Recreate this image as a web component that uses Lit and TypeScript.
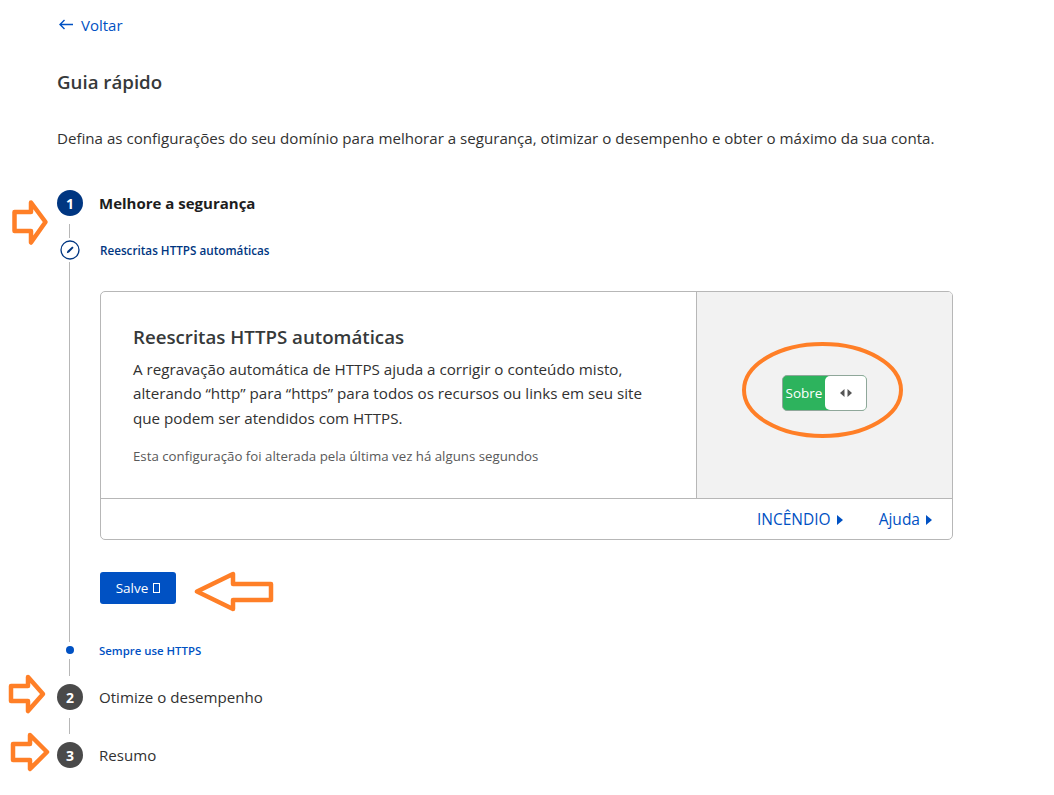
import { LitElement, css, html, svg } from 'lit';
import { customElement } from 'lit/decorators.js';

const ORANGE = '#ff7f27';

// hand-drawn annotations on top of the screenshot, page coordinates
const ARROWS = [
  '14.5,212 31,212 31,202.5 45.5,222 31,242.5 31,231 14.5,231',
  '197,591.5 233,574 233,584 271,584 271,600 233,600 233,609',
  '11,686 28,686 28,677 43,694 28,711 28,701 11,701',
  '13,744 30,744 30,735 47,752 30,769 30,760 13,760',
];

@customElement('app-root')
export class AppRoot extends LitElement {
  render() {
    return html`
      <main>
        <a class="back">
          <svg width="16" height="12" viewBox="0 0 16 12" fill="none" stroke="currentColor" stroke-width="1.4">
            <path d="M15 5.5H2M6.5 1 2 5.5 6.5 10" />
          </svg>
          Voltar
        </a>
        <h1>Guia rápido</h1>
        <p class="intro">
          Defina as configurações do seu domínio para melhorar a segurança, otimizar o desempenho e obter o máximo da sua conta.
        </p>

        <div class="steps">
          <div class="rail"><span class="num active">1</span></div>
          <div class="step-title active">Melhore a segurança</div>

          <div class="rail short-a"><span class="line"></span></div>
          <div></div>

          <div class="rail">
            <span class="pencil">
              <svg width="20" height="20" viewBox="0 0 20 20" fill="none">
                <circle cx="10" cy="10" r="9" stroke="#003681" stroke-width="1.3" />
                <path d="M6.8 13.2 7.4 11 12.3 6.4 13.6 7.7 9 12.6Z" fill="#003681" />
              </svg>
            </span>
          </div>
          <div class="sub current">Reescritas HTTPS automáticas</div>

          <div class="rail long"><span class="line"></span></div>
          <div class="content">
            <section class="card">
              <div class="card-top">
                <div class="card-text">
                  <h2>Reescritas HTTPS automáticas</h2>
                  <p>A regravação automática de HTTPS ajuda a corrigir o conteúdo misto, alterando “http” para “https” para todos os recursos ou links em seu site que podem ser atendidos com HTTPS.</p>
                  <small>Esta configuração foi alterada pela última vez há alguns segundos</small>
                </div>
                <div class="card-side">
                  <div class="toggle">
                    <span class="on">Sobre</span>
                    <span class="knob">
                      <svg width="12" height="8" viewBox="0 0 12 8" fill="#555">
                        <path d="M4.5 0V8L0 4ZM7.5 0V8L12 4Z" />
                      </svg>
                    </span>
                  </div>
                </div>
              </div>
              <div class="card-foot">
                <a>INCÊNDIO <span class="tri"></span></a>
                <a>Ajuda <span class="tri"></span></a>
              </div>
            </section>
            <button>Salve <span class="tofu"></span></button>
          </div>

          <div class="rail"><span class="dot"></span></div>
          <div class="sub">Sempre use HTTPS</div>

          <div class="rail short-b"><span class="line"></span></div>
          <div></div>

          <div class="rail"><span class="num">2</span></div>
          <div class="step-title">Otimize o desempenho</div>

          <div class="rail short-c"><span class="line"></span></div>
          <div></div>

          <div class="rail"><span class="num">3</span></div>
          <div class="step-title">Resumo</div>
        </div>
      </main>

      <svg class="marks" width="1054" height="795" viewBox="0 0 1054 795" fill="none" stroke=${ORANGE} stroke-width="4.5">
        ${ARROWS.map((p) => svg`<polygon points=${p} stroke-linejoin="round" />`)}
        <ellipse cx="822.5" cy="390" rx="78.5" ry="46" stroke-width="4" />
      </svg>
    `;
  }

  static styles = css`
    :host {
      display: block;
      position: relative;
      height: 795px;
      overflow: hidden;
      background: #fff;
      color: #313131;
      font-family: 'Open Sans', sans-serif;
    }

    main {
      padding: 15px 0 0 57px;
    }

    .back {
      display: flex;
      align-items: center;
      gap: 7px;
      height: 20px;
      padding-left: 1px;
      font-size: 15px;
      color: #0051c3;
    }

    h1 {
      margin: 33px 0 0;
      font-size: 18.7px;
      line-height: 28px;
      font-weight: 600;
      color: #36393a;
    }

    .intro {
      margin: 30px 0 0;
      font-size: 15.12px;
      line-height: 24px;
      color: #313131;
    }

    .steps {
      display: grid;
      grid-template-columns: 26px 1fr;
      column-gap: 16px;
      margin-top: 40px;
    }

    .rail {
      display: flex;
      flex-direction: column;
      align-items: center;
    }

    .line {
      flex: 1;
      width: 1px;
      margin-right: 1px;
      background: #b7b7b7;
    }

    .short-a {
      height: 14px;
      padding: 8px 0 2px;
    }

    .long {
      padding-top: 2px;
    }

    .short-b {
      height: 17px;
      padding-bottom: 8px;
    }

    .short-c {
      height: 16px;
      padding: 8px 0;
    }

    .num {
      display: flex;
      align-items: center;
      justify-content: center;
      width: 26px;
      height: 26px;
      border-radius: 50%;
      background: #4a4a4a;
      color: #fff;
      font-size: 14px;
      font-weight: 700;
    }

    .num.active {
      background: #003681;
    }

    .pencil {
      display: block;
      width: 20px;
      height: 20px;
    }

    .pencil svg {
      display: block;
    }

    .dot {
      width: 8px;
      height: 8px;
      margin: 4px 1px 5px 0;
      border-radius: 50%;
      background: #0051c3;
    }

    .step-title {
      font-size: 15.1px;
      line-height: 26px;
    }

    .step-title.active {
      font-size: 15px;
      font-weight: 700;
      color: #1d1d1d;
    }

    .sub {
      font-size: 11.4px;
      line-height: 17px;
      font-weight: 600;
      color: #0051c3;
    }

    .sub.current {
      margin-left: 1px;
      font-size: 11.7px;
      line-height: 20px;
      color: #003681;
    }

    .content {
      padding: 31px 0 38px 1px;
    }

    .card {
      box-sizing: border-box;
      width: 853px;
      height: 249px;
      display: flex;
      flex-direction: column;
      border: 1px solid #b7b7b7;
      border-radius: 5px;
      overflow: hidden;
    }

    .card-top {
      display: flex;
      height: 206px;
      border-bottom: 1px solid #b7b7b7;
    }

    .card-text {
      box-sizing: border-box;
      width: 596px;
      padding: 31px 32px 0;
      border-right: 1px solid #b7b7b7;
    }

    h2 {
      margin: 0;
      font-size: 18.7px;
      line-height: 28px;
      font-weight: 600;
      color: #36393a;
    }

    .card-text p {
      margin: 6px 0 0;
      font-size: 15.2px;
      line-height: 24.3px;
    }

    .card-text small {
      display: block;
      margin-top: 17px;
      font-size: 13.27px;
      line-height: 18px;
      color: #595959;
    }

    .card-side {
      flex: 1;
      display: flex;
      align-items: center;
      justify-content: center;
      padding-bottom: 4px;
      background: #f2f2f2;
    }

    .toggle {
      box-sizing: border-box;
      display: flex;
      width: 85px;
      height: 36px;
      border: 1px solid #8fa79a;
      border-radius: 5px;
      background: #2db35d;
      overflow: hidden;
    }

    .on {
      width: 42px;
      font-size: 13.5px;
      line-height: 34px;
      text-align: center;
      color: #fff;
    }

    .knob {
      flex: 1;
      display: flex;
      align-items: center;
      justify-content: center;
      background: #fff;
      border-radius: 5px 0 0 5px;
    }

    .card-foot {
      flex: 1;
      display: flex;
      align-items: center;
      justify-content: flex-end;
      gap: 36px;
      padding-right: 20px;
      font-size: 15.5px;
      color: #0051c3;
    }

    .tri {
      display: inline-block;
      width: 0;
      height: 0;
      margin-left: 2px;
      border-left: 6px solid #0051c3;
      border-top: 5px solid transparent;
      border-bottom: 5px solid transparent;
    }

    button {
      display: flex;
      align-items: center;
      justify-content: center;
      gap: 5px;
      width: 76px;
      height: 32px;
      margin-top: 32px;
      padding: 0;
      border: 0;
      border-radius: 3px;
      background: #0051c3;
      color: #fff;
      font-family: inherit;
      font-size: 13.5px;
    }

    .tofu {
      box-sizing: border-box;
      width: 7px;
      height: 10px;
      border: 1px solid #fff;
    }

    .marks {
      position: absolute;
      left: 0;
      top: 0;
      pointer-events: none;
    }
  `;
}

declare global {
  interface HTMLElementTagNameMap {
    'app-root': AppRoot;
  }
}
